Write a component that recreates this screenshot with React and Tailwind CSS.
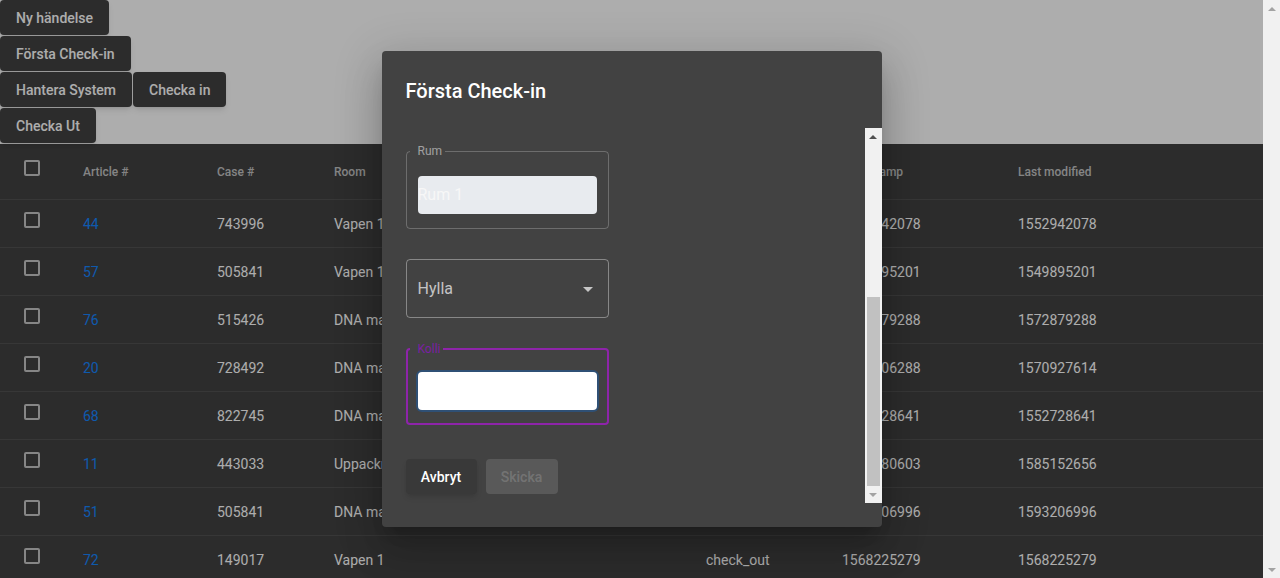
const ROWS = [
  { article: 44, caseNo: 743996, room: 'Vapen 1', status: 'check_in', stamp: 1552942078, modified: 1552942078 },
  { article: 57, caseNo: 505841, room: 'Vapen 1', status: 'check_in', stamp: 1549895201, modified: 1549895201 },
  { article: 76, caseNo: 515426, room: 'DNA maskin', status: 'check_in', stamp: 1572879288, modified: 1572879288 },
  { article: 20, caseNo: 728492, room: 'DNA maskin', status: 'check_out', stamp: 1570906288, modified: 1570927614 },
  { article: 68, caseNo: 822745, room: 'DNA maskin', status: 'check_in', stamp: 1552728641, modified: 1552728641 },
  { article: 11, caseNo: 443033, room: 'Uppackning', status: 'check_out', stamp: 1585080603, modified: 1585152656 },
  { article: 51, caseNo: 505841, room: 'DNA maskin', status: 'check_in', stamp: 1593206996, modified: 1593206996 },
  { article: 72, caseNo: 149017, room: 'Vapen 1', status: 'check_out', stamp: 1568225279, modified: 1568225279 },
];

const COLS = 'grid grid-cols-[83px_134px_117px_372px_136px_176px_1fr] items-center';

function Arrow({ down, color }) {
  return (
    <svg width="8" height="4" viewBox="0 0 8 4" className={color}>
      <polygon points={down ? '0,0 8,0 4,4' : '0,4 8,4 4,0'} />
    </svg>
  );
}

// looks like the classic chrome scrollbar
function Scrollbar({ thumb, upColor, downColor }) {
  return (
    <div className="w-[17px] shrink-0 h-full bg-[#f1f1f1] flex flex-col">
      <div className="h-[17px] shrink-0 flex items-center justify-center">
        <Arrow color={upColor} />
      </div>
      <div className="flex-1 flex flex-col justify-end px-[2px]">
        {thumb && <div className="h-[189px] bg-[#c1c1c1]" />}
      </div>
      <div className="h-[17px] shrink-0 flex items-center justify-center">
        <Arrow down color={downColor} />
      </div>
    </div>
  );
}

function TopButton({ children }) {
  return (
    <button className="h-[35px] px-4 rounded bg-[#424242] text-white text-sm font-medium shadow-md whitespace-nowrap">
      {children}
    </button>
  );
}

function Checkbox() {
  return <span className="block w-4 h-4 -mt-2 ml-6 rounded-[2px] border-2 border-white/70" />;
}

function Field({ label, value, focused }) {
  return (
    <fieldset
      className={`w-[203px] rounded ${
        focused ? 'border-2 border-[#8e24aa] px-[10px] pt-[15px] pb-[13px]' : 'border border-white/[0.23] px-[11px] pt-[17px] pb-[14px]'
      }`}
    >
      <legend className={`-ml-2 pl-2 pr-[3px] text-xs leading-4 ${focused ? 'text-[#7b1fa2]' : 'text-white/50'}`}>{label}</legend>
      {focused ? (
        <div className="h-[38px] rounded bg-white ring-2 ring-[#2f5075]" />
      ) : (
        <div className="h-[38px] rounded bg-[#e8ebef] text-base text-[#f7f7f7] flex items-center">{value}</div>
      )}
    </fieldset>
  );
}

function CheckInDialog() {
  return (
    <div className="w-[500px] h-[476px] flex flex-col rounded bg-[#424242] text-white shadow-[0_11px_15px_-7px_rgba(0,0,0,0.2),0_24px_38px_3px_rgba(0,0,0,0.14),0_9px_46px_8px_rgba(0,0,0,0.12)]">
      <h2 className="h-[77px] shrink-0 px-6 pt-[24px] text-xl leading-8 font-medium">Första Check-in</h2>
      <div className="h-[375px] shrink-0 flex">
        {/* scrolled to the bottom: lay the form out from the bottom edge */}
        <div className="flex-1 min-w-0 overflow-hidden flex flex-col justify-end px-6 pb-[9px]">
          <div className="shrink-0">
            <Field label="Rum" value="Rum 1" />
          </div>
          <div className="mt-[30px] shrink-0 w-[203px] h-[59px] rounded border border-white/[0.37] pl-[11px] pr-2 flex items-center justify-between">
            <span className="text-base text-white/70">Hylla</span>
            <svg width="24" height="24" viewBox="0 0 24 24" className="fill-white/70">
              <path d="M7 10l5 5 5-5z" />
            </svg>
          </div>
          <div className="mt-[23px] shrink-0">
            <Field label="Kolli" focused />
          </div>
          <div className="mt-[34px] shrink-0 flex gap-[9px]">
            <button className="h-[35px] w-[71px] rounded bg-[#393939] text-sm font-medium text-white shadow-md">Avbryt</button>
            <button className="h-[35px] w-[72px] rounded bg-white/[0.12] text-sm font-medium text-white/[0.18]">Skicka</button>
          </div>
        </div>
        <Scrollbar thumb upColor="fill-[#505050]" downColor="fill-[#a3a3a3]" />
      </div>
    </div>
  );
}

export default function App() {
  return (
    <div className="flex h-screen bg-white font-['Roboto',sans-serif]">
      <div className="relative flex-1 min-w-0 h-full overflow-hidden">
        <div className="flex flex-col items-start gap-px pb-px">
          <TopButton>Ny händelse</TopButton>
          <TopButton>Första Check-in</TopButton>
          <div className="flex gap-px">
            <TopButton>Hantera System</TopButton>
            <TopButton>Checka in</TopButton>
          </div>
          <TopButton>Checka Ut</TopButton>
        </div>

        <div className="bg-[#424242] text-white">
          <div className={`${COLS} h-14 border-b border-[#515151] text-xs font-medium text-white/70`}>
            <Checkbox />
            <span>Article #</span>
            <span>Case #</span>
            <span>Room</span>
            <span>Status</span>
            <span>Timestamp</span>
            <span>Last modified</span>
          </div>
          {ROWS.map((r) => (
            <div key={r.article} className={`${COLS} h-12 border-b border-[#515151] text-sm`}>
              <Checkbox />
              <span className="text-[#1585ff]">{r.article}</span>
              <span>{r.caseNo}</span>
              <span>{r.room}</span>
              <span>{r.status}</span>
              <span>{r.stamp}</span>
              <span>{r.modified}</span>
            </div>
          ))}
        </div>

        {/* backdrop + dialog */}
        <div className="absolute inset-0 bg-black/[0.32] flex items-center justify-center">
          <CheckInDialog />
        </div>
      </div>
      <Scrollbar upColor="fill-[#a3a3a3]" downColor="fill-[#a3a3a3]" />
    </div>
  );
}
